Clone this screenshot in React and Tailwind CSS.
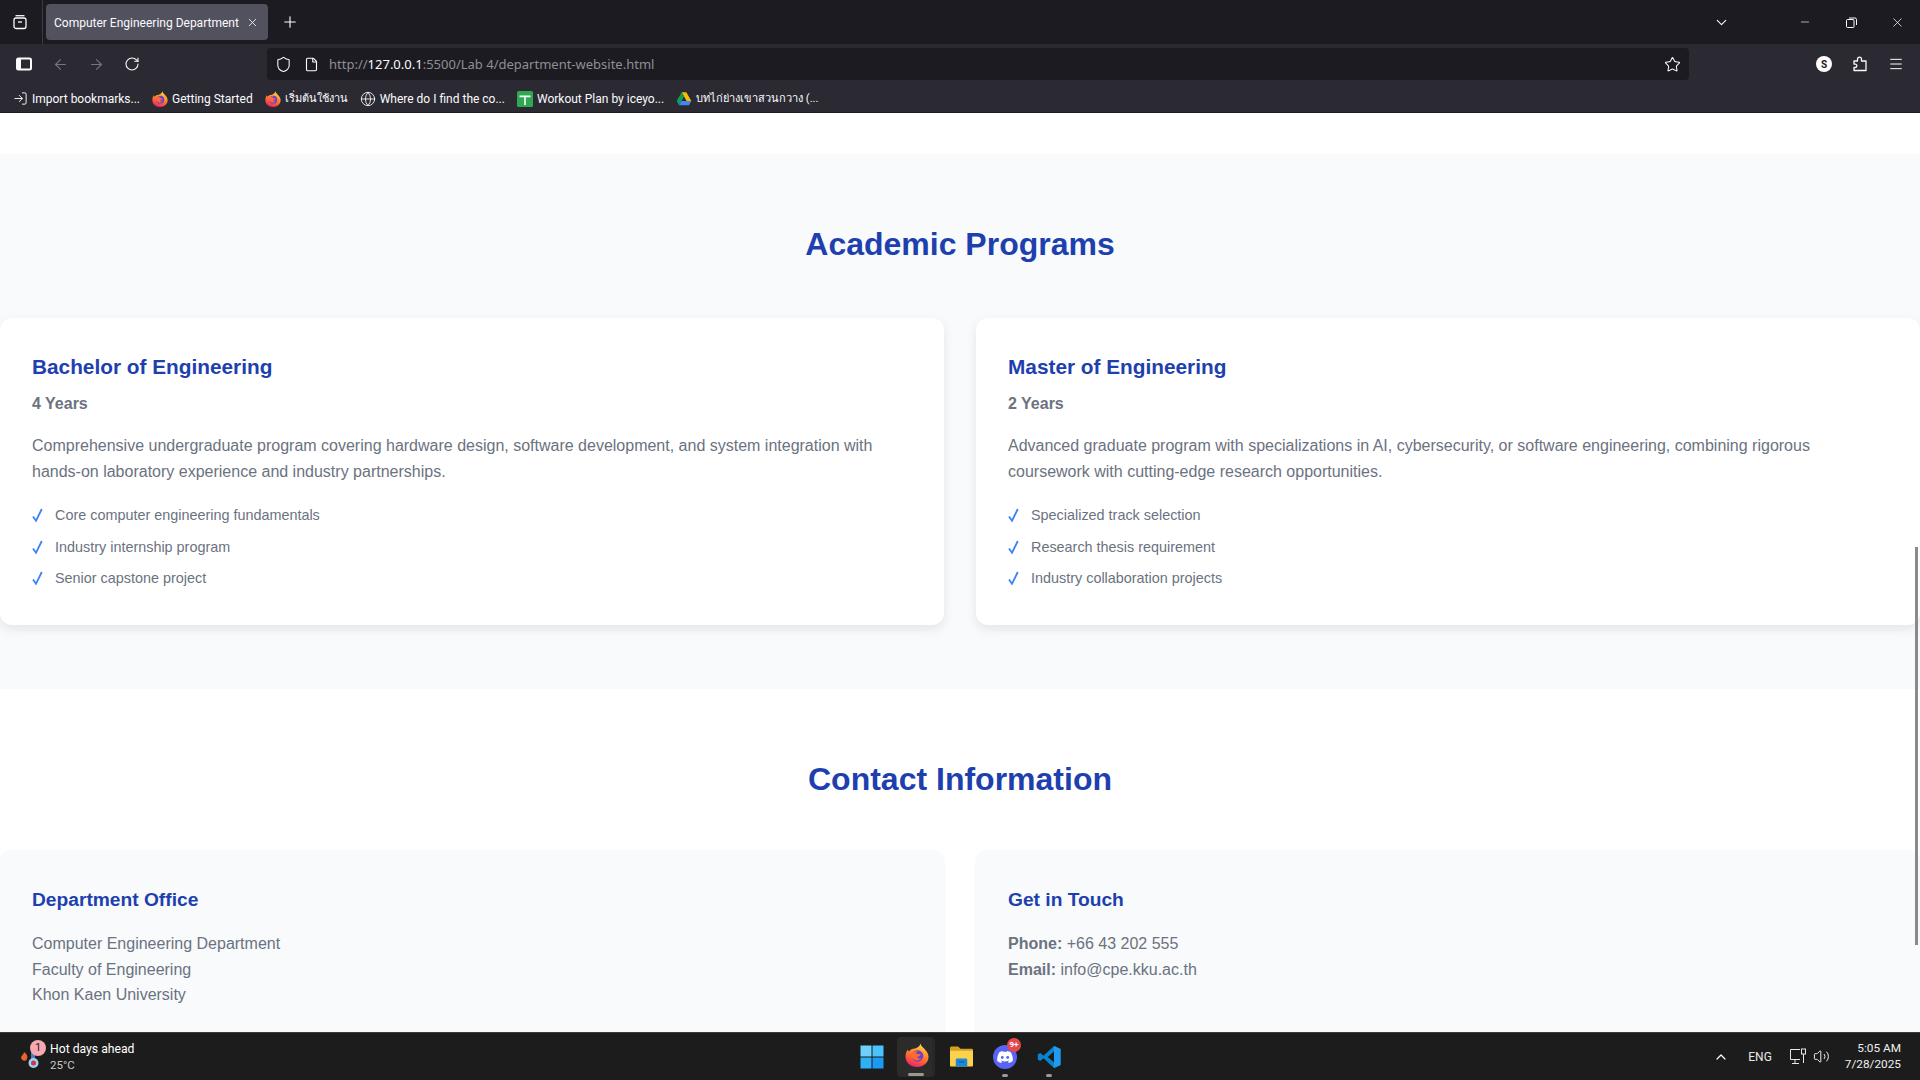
import React from "react";
import { ArrowLeft, ArrowRight, RotateCw, Shield, File, Star, Menu, Plus, X, ChevronDown, Minus, ChevronUp, Volume2, Globe, LogIn } from "lucide-react";

const Firefox = ({ s = 16, id = "ff" }) => (
  <svg width={s} height={s} viewBox="0 0 24 24">
    <defs>
      <linearGradient id={id} x1="0.75" y1="0" x2="0.35" y2="1">
        <stop offset="0" stopColor="#ffe14d" />
        <stop offset="0.35" stopColor="#ff9a2e" />
        <stop offset="0.7" stopColor="#ff5a36" />
        <stop offset="1" stopColor="#e9246f" />
      </linearGradient>
    </defs>
    <path d="M15.500 0.500c.3 2.500 2.500 3.500 4 5.500C22 8.500 23.500 11 23.500 14 23.500 19.500 18.500 24 12 24S.5 19.500.5 13.500C.5 10.500 1.500 8 3 6.500c.1 1 .4 1.800 1 2.300C5.200 6.500 7.500 5.500 10 5.500 12.500 5 15 3 15.500.5z" fill={`url(#${id})`} />
    <circle cx="12.500" cy="13" r="5.800" fill="#6a3fd0" />
    <path d="M6.500 10.500c1.800-2.200 4.500-2.700 6.500-1.800-1 .2-1.800.8-2.200 1.500 1.500.9 3.500.8 5 1.300-.5 1.800-2.300 2.400-4 2.200.6 1.600 2.800 2.300 4.700 1.600-1.500 2.200-5 2.800-7.500 1.300-2.500-1.500-3.500-3.800-2.500-6.100z" fill="#ff6a33" />
  </svg>
);

const Drive = () => (
  <svg width="16" height="16" viewBox="0 0 24 24">
    <path d="M8.500 2h7l7.500 13h-7z" fill="#fbbc04" />
    <path d="M8.500 2 1 15l3.500 6.500L12 8.500z" fill="#0f9d58" />
    <path d="M8 15h15l-3.500 6.500h-15z" fill="#4285f4" />
  </svg>
);

const Sheet = () => (
  <svg width="16" height="16" viewBox="0 0 16 16">
    <rect width="16" height="16" rx="1.500" fill="#2fa84f" />
    <path d="M2.500 4.500h11v1.700H8.800V14H7.200V6.200H2.500z" fill="#fff" />
  </svg>
);

const Check = () => (
  <svg width="12" height="15" viewBox="0 0 12 15" className="mt-[4px] shrink-0" fill="none" stroke="#3b82f6" strokeWidth="1.800">
    <path d="M1 8.500 4 12.800 9.800 1" />
  </svg>
);

const Bookmark = ({ icon, children, thai }) => (
  <div className="flex items-center gap-[4px] text-[12px] leading-[16px] text-[#fbfbfe] whitespace-nowrap pt-[1px]">
    {icon}
    <span className={thai ? "text-[11px]" : ""}>{children}</span>
  </div>
);

const ProgramCard = ({ title, years, desc, items }) => (
  <div className="bg-white rounded-xl p-8 h-[307px] shadow-[0_4px_12px_rgba(0,0,0,0.09)]">
    <h3 className="text-[20.8px] leading-[33px] font-bold text-[#1e40af] mb-2">{title}</h3>
    <p className="text-[16px] leading-[25.6px] font-bold text-[#6b7280] mb-4">{years}</p>
    <p className="text-[16px] leading-[26px] text-[#6b7280] mb-[15px]">{desc}</p>
    <ul>
      {items.map((t) => (
        <li key={t} className="flex text-[14.4px] leading-[23px] h-[31px] first:h-[32px] py-[4px] text-[#6b7280]">
          <span className="w-[23px] shrink-0"><Check /></span>
          <span>{t}</span>
        </li>
      ))}
    </ul>
  </div>
);

export default function App() {
  return (
    <div className="h-screen w-full flex flex-col overflow-hidden bg-white font-['Liberation_Sans',sans-serif]">
      <header className="h-[113px] shrink-0 flex flex-col font-['Roboto','Noto_Sans',sans-serif]">
        <div className="h-[44px] bg-[#1c1b22] flex items-center text-[#fbfbfe]">
          <div className="w-[43px] h-[44px] flex items-center justify-center border-r border-[#3a3a42]">
            <svg width="16" height="16" viewBox="0 0 16 16" fill="none" stroke="#fbfbfe" strokeWidth="1.300" className="-ml-[2px]">
              <path d="M3.500 1.700h9" />
              <rect x="2" y="4" width="12" height="10.500" rx="2" />
              <path d="M6 8h4" />
            </svg>
          </div>
          <div className="ml-[3px] w-[222px] h-[36px] bg-[#52525e] rounded-[4px] flex items-center pl-[8px]">
            <span className="text-[12px] leading-[18px] pt-[1px] overflow-hidden whitespace-nowrap w-[188px]">Computer Engineering Department</span>
            <X size={13} strokeWidth={1.500} className="ml-[4px]" />
          </div>
          <Plus size={18} strokeWidth={1.500} className="ml-[13px]" />
          <div className="flex-1" />
          <ChevronDown size={17} strokeWidth={1.500} className="mr-[52px]" />
          <div className="w-[46px] flex justify-center"><Minus size={12} strokeWidth={1.300} /></div>
          <div className="w-[46px] flex justify-center">
            <svg width="11" height="11" viewBox="0 0 11 11" fill="none" stroke="#fbfbfe" strokeWidth="1">
              <rect x="0.500" y="2.500" width="7.500" height="8" rx="1" />
              <path d="M3 1h6a1.500 1.500 0 0 1 1.500 1.500V8" />
            </svg>
          </div>
          <div className="w-[46px] flex justify-center"><X size={15} strokeWidth={1.200} /></div>
        </div>
        <div className="h-[40px] bg-[#2b2a33] flex items-center text-[#fbfbfe]">
          <div className="w-[267px] flex items-center shrink-0">
            <svg width="16" height="16" viewBox="0 0 16 16" className="ml-[16px]" fill="none" stroke="#fbfbfe">
              <rect x="1" y="2.500" width="14" height="11" rx="1.500" strokeWidth="2" />
              <rect x="1" y="3" width="4" height="10" fill="#fbfbfe" stroke="none" />
            </svg>
            <ArrowLeft size={17} strokeWidth={1.500} className="ml-[20px] text-[#77767e]" />
            <ArrowRight size={17} strokeWidth={1.500} className="ml-[19px] text-[#77767e]" />
            <RotateCw size={16} strokeWidth={1.600} className="ml-[19px]" />
          </div>
          <div className="w-[1422px] h-[32px] bg-[#1c1b22] rounded-[4px] flex items-center shrink-0">
            <Shield size={17} strokeWidth={1.500} className="ml-[8px]" />
            <File size={15} strokeWidth={1.800} className="ml-[12px]" />
            <span className="ml-[10px] pt-[1px] font-['Noto_Sans',sans-serif] text-[13px] text-[#8f8f94] whitespace-nowrap">
              http://<span className="text-[#fbfbfe]">127.0.0.1</span>:5500/Lab 4/department-website.html
            </span>
            <div className="flex-1" />
            <Star size={17} strokeWidth={1.500} className="mr-[8px]" />
          </div>
          <div className="flex-1 flex items-center">
            <div className="ml-[127px] w-[16px] h-[16px] rounded-full bg-white text-[#1c1b22] text-[10px] font-bold flex items-center justify-center">S</div>
            <svg width="16" height="16" viewBox="0 0 16 16" fill="none" stroke="#fbfbfe" strokeWidth="1.300" className="ml-[20px]">
              <path d="M5.500 5V3.200a2 2 0 0 1 4 0V5h4.500v9.500H2v-3h1.200a1.700 1.700 0 0 0 0-3.400H2V5z" strokeLinejoin="round" />
            </svg>
            <Menu size={16} strokeWidth={1.500} className="ml-[20px]" />
          </div>
        </div>
        <div className="h-[29px] bg-[#2b2a33] flex items-center gap-[12px] pl-[13px] border-b border-[#1c1b22]">
          <Bookmark icon={<LogIn size={15} className="text-[#fbfbfe]" strokeWidth={1.500} />}>Import bookmarks...</Bookmark>
          <Bookmark icon={<Firefox id="ffa" />}>Getting Started</Bookmark>
          <Bookmark thai icon={<Firefox id="ffb" />}>เริ่มต้นใช้งาน</Bookmark>
          <Bookmark icon={<Globe size={16} className="text-[#fbfbfe]" strokeWidth={1.300} />}>Where do I find the co...</Bookmark>
          <Bookmark icon={<Sheet />}>Workout Plan by iceyo...</Bookmark>
          <Bookmark thai icon={<Drive />}>บทไก่ย่างเขาสวนกวาง (...</Bookmark>
        </div>
      </header>

      <main className="flex-1 min-h-0 overflow-hidden relative">
        <div className="h-[41px] bg-white" />
        <section className="bg-[#f8fafc] h-[535px] pt-[65px]">
          <h2 className="text-[32px] leading-[51px] font-bold text-[#1e40af] text-center mb-[48px]">Academic Programs</h2>
          <div className="grid grid-cols-2 gap-8">
            <ProgramCard
              title="Bachelor of Engineering"
              years="4 Years"
              desc="Comprehensive undergraduate program covering hardware design, software development, and system integration with hands-on laboratory experience and industry partnerships."
              items={["Core computer engineering fundamentals", "Industry internship program", "Senior capstone project"]}
            />
            <ProgramCard
              title="Master of Engineering"
              years="2 Years"
              desc="Advanced graduate program with specializations in AI, cybersecurity, or software engineering, combining rigorous coursework with cutting-edge research opportunities."
              items={["Specialized track selection", "Research thesis requirement", "Industry collaboration projects"]}
            />
          </div>
        </section>
        <section className="bg-white pt-[65px]">
          <h2 className="text-[32px] leading-[51px] font-bold text-[#1e40af] text-center mb-[45px]">Contact Information</h2>
          <div className="grid grid-cols-2 gap-8">
            <div className="bg-[#f8fafc] rounded-xl px-8 pt-[34px] h-[300px] shadow-[0_1px_3px_rgba(0,0,0,0.06)]">
              <h3 className="text-[19.2px] leading-[31px] font-bold text-[#1e40af] mb-[16px]">Department Office</h3>
              <p className="text-[16px] leading-[25.6px] text-[#6b7280]">
                Computer Engineering Department<br />Faculty of Engineering<br />Khon Kaen University
              </p>
            </div>
            <div className="bg-[#f8fafc] rounded-xl px-8 pt-[34px] h-[300px] shadow-[0_1px_3px_rgba(0,0,0,0.06)]">
              <h3 className="text-[19.2px] leading-[31px] font-bold text-[#1e40af] mb-[16px]">Get in Touch</h3>
              <p className="text-[16px] leading-[25.6px] text-[#6b7280]">
                <strong>Phone:</strong> +66 43 202 555<br /><strong>Email:</strong> info@cpe.kku.ac.th
              </p>
            </div>
          </div>
        </section>
        <div className="absolute right-[2px] top-[434px] w-[3px] h-[398px] bg-[#8a8a8a]" />
      </main>

      <footer className="h-[48px] shrink-0 bg-[#1c1c1c] border-t border-[#3a3a3a] flex items-center font-['Roboto','Noto_Sans',sans-serif] text-white">
        <div className="w-[833px] flex items-center pl-[20px] shrink-0">
          <div className="relative w-[30px] h-[30px]">
            <svg width="30" height="30" viewBox="0 0 30 30">
              <path d="M1 15c1-2 3-3 3-5 3 2 4 4 3 7-1 3-6 2-6-2z" fill="#e8622c" />
              <path d="M13 8v13" stroke="#4f7fb5" strokeWidth="4" strokeLinecap="round" />
              <circle cx="13.500" cy="21" r="5" fill="#9dd3f0" />
              <circle cx="13.500" cy="21" r="2.500" fill="#d8324a" />
            </svg>
            <div className="absolute left-[10px] top-[-2px] w-[16px] h-[16px] rounded-full bg-[#f7a8b0] text-[#222] text-[11px] leading-[16px] text-center">1</div>
          </div>
          <div className="text-[12.2px] leading-[16px]">
            <div>Hot days ahead</div>
            <div className="text-[11.5px] text-[#c8c8c8]">25°C</div>
          </div>
        </div>
        <div className="w-[64px] flex justify-end pr-[13px] shrink-0">
          <svg width="24" height="24" viewBox="0 0 24 24">
            <rect x="0.500" y="0.500" width="11" height="11" fill="#6fd0fb" />
            <rect x="12.500" y="0.500" width="11" height="11" fill="#4cc2fa" />
            <rect x="0.500" y="12.500" width="11" height="11" fill="#2eb0f5" />
            <rect x="12.500" y="12.500" width="11" height="11" fill="#1a9af0" />
          </svg>
        </div>
        <div className="relative w-[35px] h-[40px] bg-[#2b2b2b] rounded-[4px] flex items-center justify-center pl-[4px] pb-[3px] shadow-[3px_0_0_#282828] shrink-0">
          <Firefox s={24} id="ffc" />
          <div className="absolute bottom-[1px] left-[11px] w-[16px] h-[3px] rounded-full bg-[#9a9a8c]" />
        </div>
        <div className="w-[52px] flex justify-center ml-[3px] shrink-0">
          <svg width="25" height="23" viewBox="0 0 26 24">
            <path d="M1 3a1.500 1.500 0 0 1 1.500-1.500h7L12 4h12a1.500 1.500 0 0 1 1 1.500V8H1z" fill="#d6a021" />
            <path d="M1 6h24v15.500a1 1 0 0 1-1 1H2a1 1 0 0 1-1-1z" fill="#fcd14d" />
            <path d="M7 15.500a1.500 1.500 0 0 1 1.500-1.500h9a1.500 1.500 0 0 1 1.500 1.500v7H7z" fill="#1e88d8" />
            <rect x="10" y="17" width="6" height="1.300" fill="#0e5fa8" />
          </svg>
        </div>
        <div className="relative w-[24px] h-[24px] rounded-full bg-[#5865f2] flex items-center justify-center ml-[6px] shrink-0">
          <svg width="16" height="12" viewBox="0 0 16 12">
            <path d="M13.500 1A13 13 0 0 0 10.300 0l-.4.800a12 12 0 0 0-3.800 0L5.700 0a13 13 0 0 0-3.200 1C.5 4 0 7 .200 10c1.400 1 2.700 1.600 4 2l.9-1.400-1.400-.7.400-.3a9 9 0 0 0 7.800 0l.4.300-1.400.7.900 1.400c1.300-.4 2.600-1 4-2 .3-3.500-.5-6.500-2.300-9z" fill="#fff" />
            <circle cx="5.300" cy="6.500" r="1.400" fill="#5865f2" />
            <circle cx="10.700" cy="6.500" r="1.400" fill="#5865f2" />
          </svg>
          <div className="absolute left-[14px] top-[-7px] w-[14px] h-[14px] rounded-full bg-[#e5484d] text-white text-[8px] font-bold leading-[14px] text-center">9+</div>
          <div className="absolute bottom-[-8px] left-[9px] w-[6px] h-[3px] rounded-full bg-[#9a9a9a]" />
        </div>
        <div className="relative ml-[20px] w-[24px] h-[24px] shrink-0">
          <svg width="24" height="24" viewBox="0 0 24 24">
            <path d="M17 1 23.500 4v16L17 23 6.500 13.300l-3.300 2.600L.800 14.500V9.500l2.400-1.400 3.300 2.600z" fill="#0a84d0" />
            <path d="M17 6.500 10.800 12 17 17.500z" fill="#1c1c1c" />
            <path d="M17 1 23.500 4v16L17 23z" fill="#1f9cf0" />
          </svg>
          <div className="absolute bottom-[-8px] left-[9px] w-[6px] h-[3px] rounded-full bg-[#9a9a9a]" />
        </div>
        <div className="flex-1" />
        <ChevronUp size={16} strokeWidth={1.800} className="mr-[19px]" />
        <span className="text-[12px] mr-[17px] text-[#e8e8e8]">ENG</span>
        <svg width="18" height="17" viewBox="0 0 18 17" fill="none" stroke="#e8e8e8" strokeWidth="1" className="mr-[6px]">
          <path d="M11 1.500H1.500v10H11M6 11.500V15M3 15.500h7" />
          <rect x="12.500" y="1" width="4" height="5" />
          <path d="M14.500 6v9" />
        </svg>
        <Volume2 size={17} strokeWidth={1.400} className="mr-[15px] text-[#f0f0f0]" />
        <div className="text-[11.8px] leading-[16px] text-right mr-[19px] -mt-[2px] text-[#f0f0f0]">
          <div>5:05 AM</div>
          <div>7/28/2025</div>
        </div>
      </footer>
    </div>
  );
}
